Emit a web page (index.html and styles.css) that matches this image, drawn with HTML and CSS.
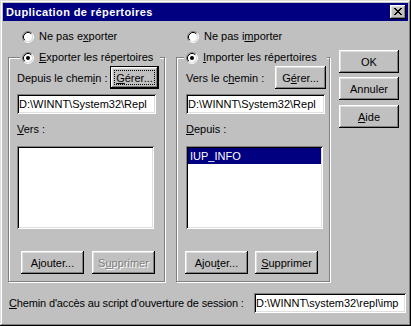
FILE: index.html
```html
<!DOCTYPE html>
<html lang="fr">
  <head>
    <meta charset="UTF-8" />
    <meta name="viewport" content="width=device-width, initial-scale=1.0" />
    <title>Duplication de répertoires</title>
    <link rel="stylesheet" href="styles.css">
  </head>
  <body>
    <svg class="defs" width="0" height="0">
      <symbol id="radio" viewBox="0 0 12 12">
        <circle cx="6" cy="6" r="4.5" fill="#fff" />
        <path d="M2.11 9.89A5.5 5.5 0 0 1 9.89 2.11" fill="none" stroke="#808080" />
        <path d="M9.89 2.11A5.5 5.5 0 0 1 2.11 9.89" fill="none" stroke="#fff" />
        <path d="M2.82 9.18A4.5 4.5 0 0 1 9.18 2.82" fill="none" stroke="#000" />
        <path d="M9.18 2.82A4.5 4.5 0 0 1 2.82 9.18" fill="none" stroke="#dfdfdf" />
      </symbol>
      <symbol id="radio-on" viewBox="0 0 12 12">
        <use href="#radio" />
        <circle cx="6" cy="6" r="2" fill="#000" />
      </symbol>
    </svg>

    <div class="window">
      <div class="titlebar">
        <span class="title">Duplication de répertoires</span>
        <button class="close">
          <svg width="8" height="7" viewBox="0 0 8 7">
            <path d="M0 0h2v1H0zM6 0h2v1H6zM1 1h2v1H1zM5 1h2v1H5zM2 2h4v1H2zM3 3h2v1H3zM2 4h4v1H2zM1 5h2v1H1zM5 5h2v1H5zM0 6h2v1H0zM6 6h2v1H6z" fill="#000" />
          </svg>
        </button>
      </div>

      <div class="body">
        <div class="top-radios">
          <label class="radio radio-export">
            <svg class="radio-ic"><use href="#radio" /></svg>
            <span>Ne pas e<u>x</u>porter</span>
          </label>
          <label class="radio">
            <svg class="radio-ic"><use href="#radio" /></svg>
            <span>Ne pas i<u>m</u>porter</span>
          </label>
        </div>

        <div class="main">
          <div class="group group-export">
            <div class="legend">
              <svg class="radio-ic"><use href="#radio-on" /></svg>
              <span><u>E</u>xporter les répertoires</span>
            </div>
            <div class="path-row">
              <span>Depuis le chem<u>i</u>n :</span>
              <button class="btn btn-manage btn-default"><u>G</u>érer...</button>
            </div>
            <div class="field">D:\WINNT\System32\Repl</div>
            <div class="label"><u>V</u>ers :</div>
            <div class="listbox"></div>
            <div class="btn-row">
              <button class="btn">A<u>j</u>outer...</button>
              <button class="btn" disabled>S<u>u</u>pprimer</button>
            </div>
          </div>

          <div class="group group-import">
            <div class="legend">
              <svg class="radio-ic"><use href="#radio-on" /></svg>
              <span><u>I</u>mporter les répertoires</span>
            </div>
            <div class="path-row">
              <span>Vers le c<u>h</u>emin :</span>
              <button class="btn btn-manage">G<u>é</u>rer...</button>
            </div>
            <div class="field">D:\WINNT\System32\Repl</div>
            <div class="label"><u>D</u>epuis :</div>
            <div class="listbox">
              <div class="list-item selected">IUP_INFO</div>
            </div>
            <div class="btn-row">
              <button class="btn">Ajou<u>t</u>er...</button>
              <button class="btn"><u>S</u>upprimer</button>
            </div>
          </div>

          <div class="side-buttons">
            <button class="btn">OK</button>
            <button class="btn">Annuler</button>
            <button class="btn btn-help"><u>A</u>ide</button>
          </div>
        </div>

        <div class="bottom-row">
          <span class="script-label"><u>C</u>hemin d'accès au script d'ouverture de session :</span>
          <div class="field field-script">D:\WINNT\system32\repl\imp</div>
        </div>
      </div>
    </div>
  </body>
</html>
```

FILE: styles.css
```css
* {
  margin: 0;
  padding: 0;
  box-sizing: border-box;
}
body {
  width: 411px;
  height: 326px;
  background-color: #c0c0c0;
  font-family: "Liberation Sans", Arial, sans-serif;
  font-size: 11px;
  color: #000;
  overflow: hidden;
}
u {
  text-underline-offset: 1px;
}
.defs {
  display: block;
  width: 0;
  height: 0;
}
.window {
  width: 411px;
  height: 326px;
  padding: 3px;
  background-color: #c0c0c0;
  box-shadow: inset -1px -1px #000, inset 1px 1px #dfdfdf,
    inset -2px -2px #808080, inset 2px 2px #fff;
  display: flex;
  flex-direction: column;
}
.titlebar {
  height: 18px;
  background-color: #000080;
  color: #fff;
  display: flex;
  align-items: center;
  justify-content: space-between;
  padding: 0 2px 0 3px;
}
.title {
  font-weight: bold;
  font-size: 11px;
  letter-spacing: 0.4px;
}
.close {
  width: 16px;
  height: 14px;
  border: none;
  background-color: #c0c0c0;
  box-shadow: inset -1px -1px #000, inset 1px 1px #fff,
    inset -2px -2px #808080, inset 2px 2px #dfdfdf;
  display: flex;
  align-items: center;
  justify-content: center;
  padding-bottom: 1px;
}
.close svg {
  display: block;
}
.body {
  flex: 1;
  padding: 9px 2px 0 5px;
  display: flex;
  flex-direction: column;
}

/* radios */
.radio,
.legend {
  display: flex;
  align-items: center;
  height: 13px;
  line-height: 13px;
}
.radio-ic {
  width: 12px;
  height: 12px;
  margin-right: 5px;
  flex-shrink: 0;
}
.top-radios {
  display: flex;
  height: 13px;
}
.radio-export {
  margin-left: 14px;
  width: 165px;
}

/* group boxes */
.main {
  display: flex;
  margin-top: 7px;
}
.group {
  margin-top: 7px;
  height: 225px;
  border: 1px solid #808080;
  box-shadow: inset 1px 1px #fff, 1px 1px #fff;
  display: flex;
  flex-direction: column;
}
.group-export {
  width: 157px;
  padding: 0 5px 0 8px;
}
.group-import {
  width: 154px;
  margin-left: 11px;
  padding: 0 3px 0 9px;
}
.legend {
  margin-top: -7px;
  background-color: #c0c0c0;
  padding-left: 2px;
}
.group-export .legend {
  margin-left: 3px;
  width: 140px;
}
.group-import .legend {
  margin-left: -2px;
  width: 143px;
}
.path-row {
  display: flex;
  align-items: center;
  justify-content: space-between;
  height: 23px;
  margin-top: 2px;
}
.label {
  margin-top: 9px;
  height: 13px;
  line-height: 13px;
}

/* fields */
.field,
.listbox {
  background-color: #fff;
  box-shadow: inset 1px 1px #808080, inset -1px -1px #fff,
    inset 2px 2px #000, inset -2px -2px #dfdfdf;
}
.field {
  width: 139px;
  height: 20px;
  margin-top: 5px;
  padding: 0 2px;
  line-height: 20px;
  white-space: nowrap;
  overflow: hidden;
}
.listbox {
  width: 137px;
  height: 83px;
  margin-top: 10px;
  padding: 2px;
}
.list-item {
  height: 16px;
  line-height: 16px;
  padding-left: 2px;
}
.list-item.selected {
  background-color: #000080;
  color: #fff;
}

/* buttons */
.btn {
  height: 23px;
  width: 63px;
  border: none;
  background-color: #c0c0c0;
  font-family: inherit;
  font-size: 11px;
  color: #000;
  box-shadow: inset -1px -1px #000, inset 1px 1px #fff,
    inset -2px -2px #808080, inset 2px 2px #dfdfdf;
}
.btn:disabled {
  color: #808080;
  text-shadow: 1px 1px #fff;
}
.btn-manage {
  width: 51px;
}
.btn-default {
  width: 49px;
  position: relative;
  box-shadow: inset 0 0 0 1px #000, inset -2px -2px #000, inset 2px 2px #fff,
    inset -3px -3px #808080, inset 3px 3px #dfdfdf;
}
.btn-default::after {
  content: "";
  position: absolute;
  top: 4px;
  left: 4px;
  right: 4px;
  bottom: 4px;
  border: 1px dotted #000;
}
.btn-row {
  display: flex;
  gap: 8px;
  margin-top: 22px;
}
.group-export .btn-row {
  margin-left: 4px;
}
.group-import .btn-row {
  margin-left: -1px;
  gap: 7px;
}
.side-buttons {
  display: flex;
  flex-direction: column;
  gap: 4px;
  margin-left: 9px;
}
.side-buttons .btn {
  width: 60px;
}
.btn-help {
  margin-top: 1px;
}

/* bottom */
.bottom-row {
  display: flex;
  align-items: center;
  justify-content: space-between;
  margin-top: 11px;
  padding-left: 1px;
}
.script-label {
  letter-spacing: -0.15px;
}
.field-script {
  width: 152px;
  margin-top: 0;
}
```
